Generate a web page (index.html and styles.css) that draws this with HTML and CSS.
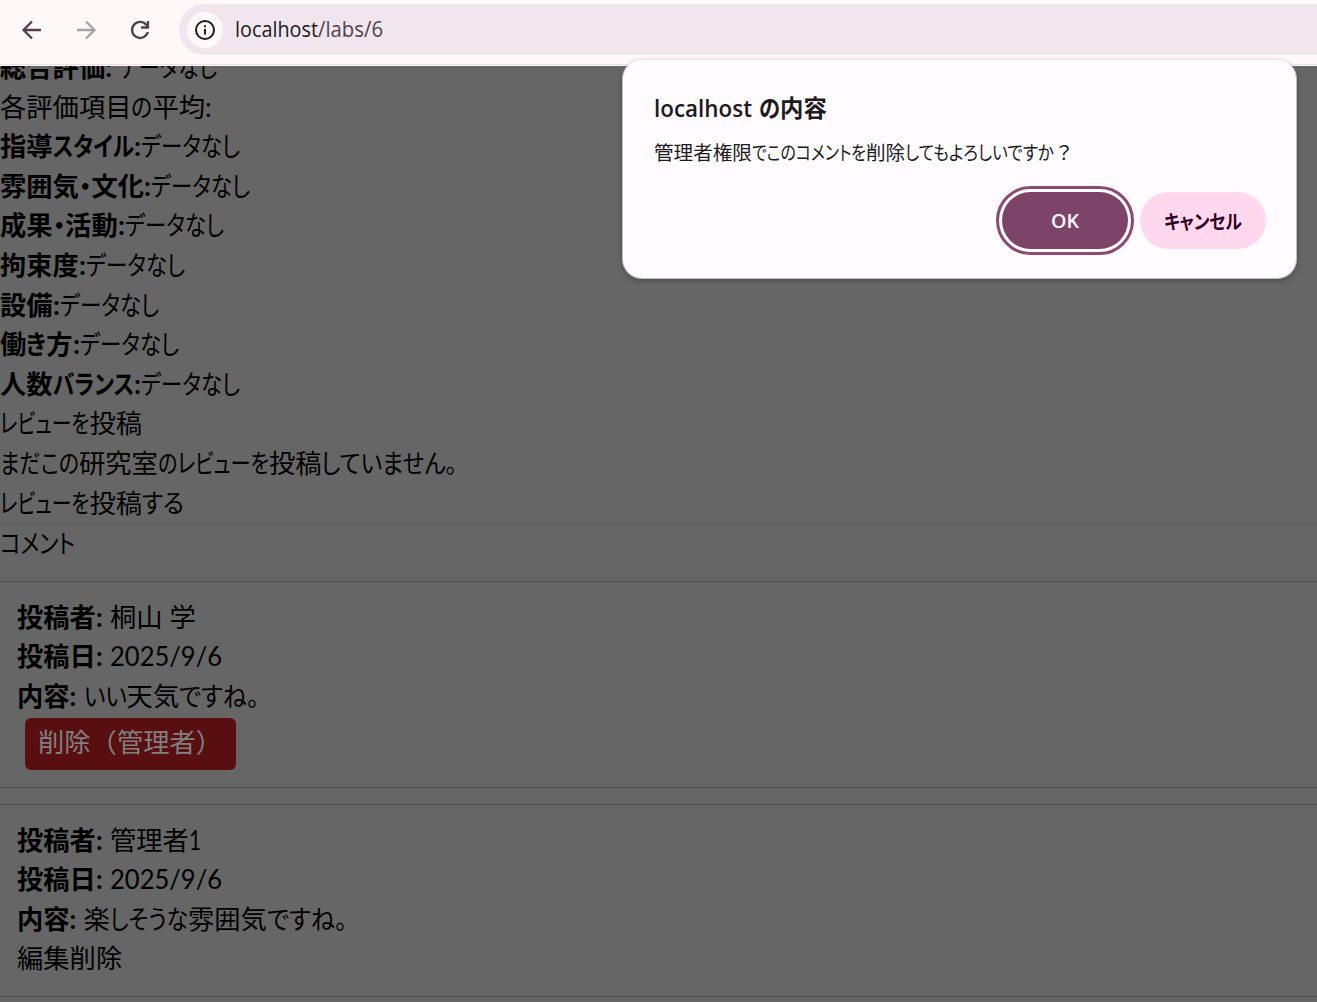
FILE: index.html
```html
<!DOCTYPE html>
<html lang="ja">
  <head>
    <meta charset="UTF-8" />
    <meta name="viewport" content="width=device-width, initial-scale=1.0" />
    <title>localhost/labs/6</title>
    <link rel="stylesheet" href="styles.css">
  </head>
  <body>
    <header class="toolbar">
      <div class="nav-icons">
        <svg class="icon" viewBox="0 0 24 24"><path d="M21 12H4M12 3.500L3.500 12l8.500 8.500" /></svg>
        <svg class="icon icon-disabled" viewBox="0 0 24 24"><path d="M3 12h17M12 3.500L20.500 12 12 20.500" /></svg>
        <svg class="icon" viewBox="0 0 24 24"><path d="M19.800 14A8 8 0 1 1 18.200 6.800L20 8.800M20 3v6.500h-7" /></svg>
      </div>
      <div class="address-bar">
        <span class="site-info">
          <svg class="info-icon" viewBox="0 0 24 24"><circle cx="12" cy="12" r="9" /><path d="M12 11v5.500M12 7.200v2" /></svg>
        </span>
        <span class="url"><span data-width="83">localhost</span><span class="url-path" data-width="65">/labs/6</span></span>
      </div>
    </header>

    <main class="page">
      <div class="lab">
        <p><b>総合評価<span data-width="14">: </span></b><span data-width="98">データなし</span></p>
        <p>各評価項目<span data-width="21">の</span>平均:</p>
        <p><b>指導<span data-width="81">スタイル</span><span data-width="7">:</span></b><span data-width="99">データなし</span></p>
        <p><b>雰囲気<span data-width="12.500">・</span>文化<span data-width="7">:</span></b><span data-width="99">データなし</span></p>
        <p><b>成果<span data-width="12.500">・</span>活動<span data-width="7">:</span></b><span data-width="99">データなし</span></p>
        <p><b>拘束度<span data-width="7">:</span></b><span data-width="99">データなし</span></p>
        <p><b>設備<span data-width="7">:</span></b><span data-width="99">データなし</span></p>
        <p><b>働<span data-width="20">き</span>方<span data-width="7">:</span></b><span data-width="99">データなし</span></p>
        <p><b>人数<span data-width="81">バランス</span><span data-width="7">:</span></b><span data-width="99">データなし</span></p>
        <p><span data-width="89.500">レビューを</span>投稿</p>
        <p><span data-width="79">まだこの</span>研究室<span data-width="111">のレビューを</span>投稿<span data-width="136">していません。</span></p>
        <p><span data-width="89.500">レビューを</span>投稿<span data-width="42">する</span></p>
      </div>

      <section class="comments">
        <p><span data-width="75">コメント</span></p>
        <article class="comment">
          <p><b>投稿者</b><span class="colon">:</span>桐山<span class="space"></span>学</p>
          <p><b>投稿日</b><span class="colon">:</span><span data-width="112">2025/9/6</span></p>
          <p><b>内容</b><span class="colon">:</span><span data-width="43">いい</span>天気<span data-width="80">ですね。</span></p>
          <button class="delete-button">削除（管理者）</button>
        </article>
        <article class="comment">
          <p><b>投稿者</b><span class="colon">:</span>管理者<span data-width="12">1</span></p>
          <p><b>投稿日</b><span class="colon">:</span><span data-width="112">2025/9/6</span></p>
          <p><b>内容</b><span class="colon">:</span>楽<span data-width="78">しそうな</span>雰囲気<span data-width="80">ですね。</span></p>
          <p>編集削除</p>
        </article>
      </section>
    </main>

    <div class="dialog">
      <h1><span data-width="98">localhost</span><span class="space"></span><span data-width="21">の</span>内容</h1>
      <p>管理者権限<span data-width="114">でこのコメントを</span>削除<span data-width="149">してもよろしいですか</span>？</p>
      <div class="button-group">
        <button class="ok-button"><span data-width="28">OK</span></button>
        <button class="cancel-button"><span data-width="78">キャンセル</span></button>
      </div>
    </div>

    <script src="script.js"></script>
  </body>
</html>
```
FILE: styles.css
```css
* {
  margin: 0;
  padding: 0;
  box-sizing: border-box;
}

body {
  height: 100vh;
  overflow: hidden;
  display: flex;
  flex-direction: column;
  background: #666;
  color: #000;
  font-family: Lato, "Noto Sans CJK JP", sans-serif;
  font-size: 26.3px;
  line-height: 39.6px;
  white-space: nowrap;
}

button {
  border: none;
  font-family: inherit;
}

[data-width] {
  display: inline-block;
  white-space: pre;
  font-feature-settings: "palt";
  transform-origin: left center;
}

/* Browser toolbar */
.toolbar {
  flex: none;
  height: 66px;
  display: flex;
  align-items: flex-start;
  padding-top: 4px;
  background: #fff8f8;
  box-shadow: inset 0 -1px #fff8f8, inset 0 -2px #f1dde8;
}

.nav-icons {
  width: 179px;
  height: 51px;
  display: flex;
  align-items: center;
  gap: 30px;
  padding-left: 20px;
}

.icon {
  width: 24px;
  height: 24px;
  fill: none;
  stroke: #54404c;
  stroke-width: 2.3;
}

.icon-disabled {
  stroke: #a9a2a5;
}

.address-bar {
  flex: 1;
  height: 51px;
  display: flex;
  align-items: center;
  gap: 12px;
  padding-left: 8px;
  background: #f1e5ee;
  border-radius: 26px 0 0 26px;
}

.site-info {
  width: 36px;
  height: 36px;
  display: flex;
  align-items: center;
  justify-content: center;
  background: #fff8f8;
  border-radius: 50%;
}

.info-icon {
  width: 24px;
  height: 24px;
  fill: none;
  stroke: #201a1d;
  stroke-width: 2;
}

.url {
  margin-top: -2px;
  color: #201a1d;
  font-family: "Open Sans", sans-serif;
  font-size: 21.5px;
}

.url-path {
  color: #514349;
}

/* Lab page under the backdrop */
.page {
  flex: 1;
  min-height: 0;
  overflow: hidden;
}

.lab {
  margin-top: -18px;
  padding-bottom: 1px;
  border-bottom: 1px solid #5c5c5c;
}

.comments {
  margin-top: -1px;
}

.comment {
  margin-top: 16.5px;
  padding: 15.5px 17px 17px;
  border-top: 1px solid #505050;
  border-bottom: 1px solid #505050;
}

.comments p + .comment {
  margin-top: 17.5px;
}

.colon {
  display: inline-block;
  width: 14px;
  font-weight: 700;
}

.space {
  display: inline-block;
  width: 7px;
}

.delete-button {
  display: block;
  width: 211px;
  height: 52px;
  margin: 1px 0 0 8px;
  padding: 0 0 7px 13px;
  background: #590f10;
  color: #808080;
  border-radius: 6px;
  font-size: 26.3px;
  text-align: left;
}

/* Confirm dialog */
.dialog {
  position: absolute;
  top: 59px;
  left: 622px;
  width: 675px;
  height: 220px;
  padding: 29px 30px 30px 31px;
  background: #fffbff;
  color: #201a1d;
  border: 1px solid #c5bcc1;
  border-top-color: #f0e5ec;
  border-radius: 20px;
  box-shadow: 0 2px 5px rgba(0, 0, 0, 0.25);
  font-family: "Open Sans", "Noto Sans CJK JP", sans-serif;
}

.dialog h1 {
  font-size: 23.4px;
  font-weight: 600;
  line-height: 38px;
}

.dialog p {
  margin-top: 10px;
  font-size: 19.6px;
  line-height: 32px;
}

.button-group {
  display: flex;
  justify-content: flex-end;
  gap: 12px;
  margin-top: 23px;
}

.button-group button {
  width: 126px;
  height: 57px;
  border-radius: 29px;
  font-size: 19.6px;
  font-weight: 600;
}

.ok-button {
  background: #7d4369;
  color: #fff;
  outline: 3px solid #8b4a76;
  outline-offset: 3px;
}

.cancel-button {
  background: #ffd8ed;
  color: #320028;
}
```
FILE: script.js
```js
// Fit each text run to its width
document.querySelectorAll("[data-width]").forEach((run) => {
  const width = Number(run.dataset.width);
  const natural = run.getBoundingClientRect().width;
  run.style.transform = "scaleX(" + width / natural + ")";
  run.style.marginRight = width - natural + "px";
});
```
